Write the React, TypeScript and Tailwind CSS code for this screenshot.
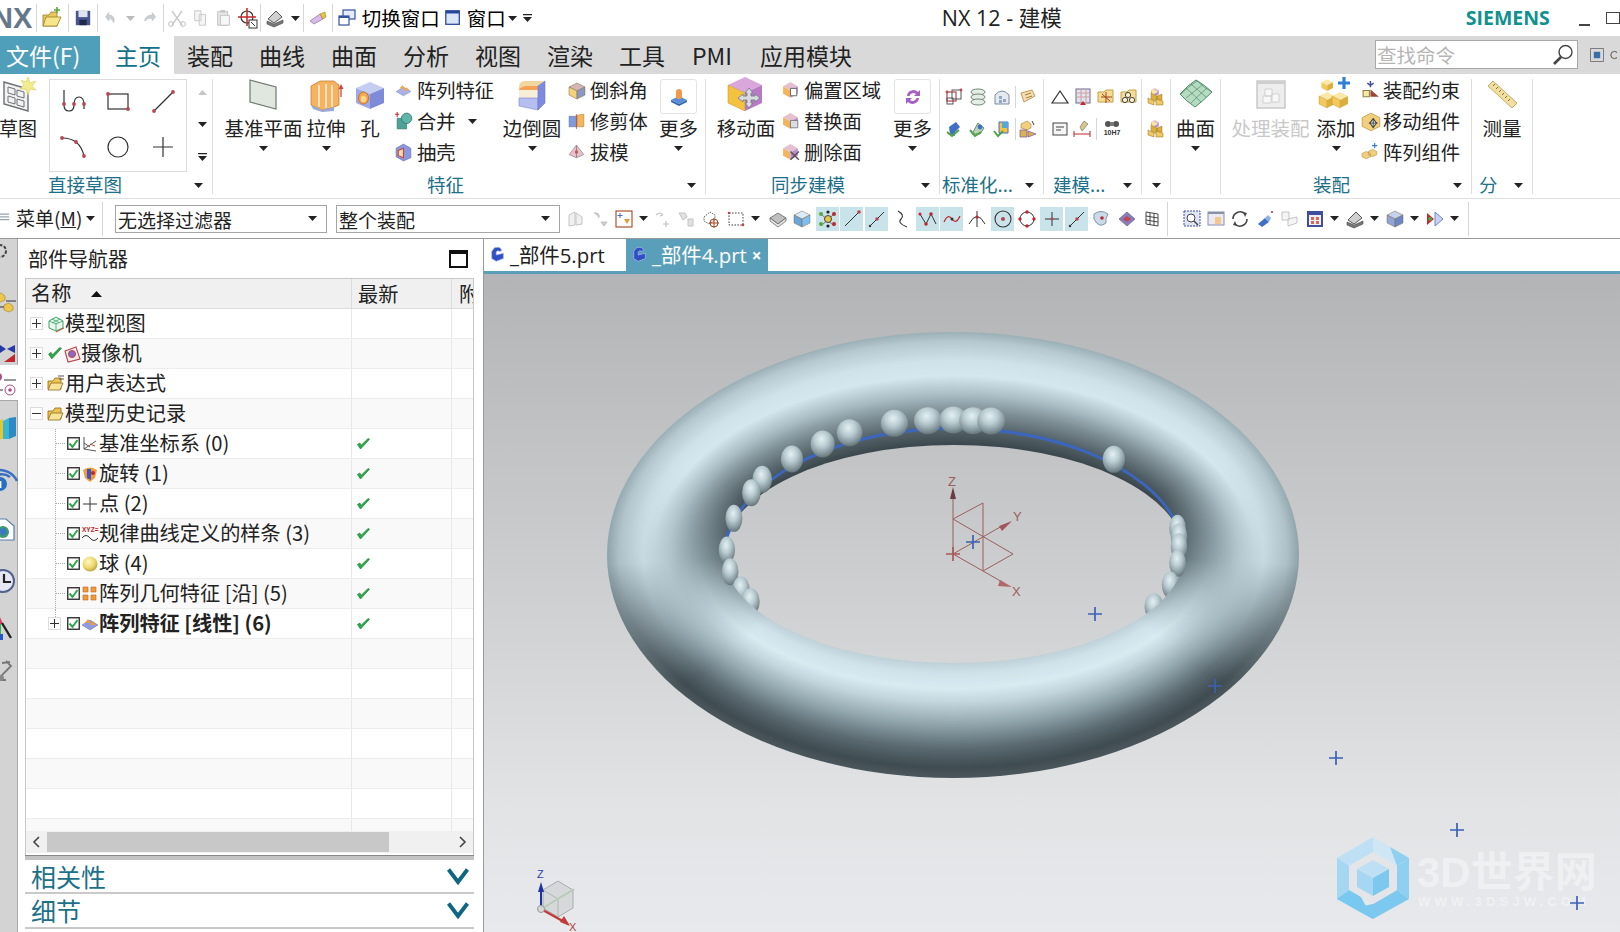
import React from "react";

type C = { children?: React.ReactNode };
const I = ({ s = 20, v = 20, children }: C & { s?: number; v?: number }) => (
  <svg width={s} height={s} viewBox={`0 0 ${v} ${v}`} className="block shrink-0">{children}</svg>
);
const Tri = () => (
  <svg width="9" height="5" viewBox="0 0 9 5" className="block shrink-0"><path d="M0 0H9L4.5 5Z" fill="#222" /></svg>
);
const TriBar = () => (
  <svg width="9" height="8" viewBox="0 0 9 8" className="block shrink-0"><path d="M0 0H9V1.2H0ZM0 3H9L4.5 8Z" fill="#222" /></svg>
);
const Cube = ({ t, l, r, s = 18 }: { t: string; l: string; r: string; s?: number }) => (
  <I s={s}>
    <path d="M10 2L18 6L10 10L2 6Z" fill={t} stroke="#7d6a4a" strokeWidth=".5" />
    <path d="M2 6L10 10V18L2 14Z" fill={l} stroke="#7d6a4a" strokeWidth=".5" />
    <path d="M10 10L18 6V14L10 18Z" fill={r} stroke="#7d6a4a" strokeWidth=".5" />
  </I>
);
const Dot = ({ x, y }: { x: number; y: number }) => <circle cx={x} cy={y} r="1.9" fill="#b5474f" />;

/* ---------- sketch gallery ---------- */
const SProfile = () => (
  <I s={30} v={30}><path d="M6 3V18Q6 24 11 24T16 18Q16 10 21 10T26 18V22M26 18" fill="none" stroke="#333" strokeWidth="1.2" /><Dot x={6} y={17} /><Dot x={16} y={17} /><Dot x={26} y={17} /></I>
);
const SRect = () => (
  <I s={30} v={30}><rect x="5" y="7" width="20" height="15" fill="none" stroke="#333" strokeWidth="1.2" /><Dot x={5} y={7} /><Dot x={25} y={22} /></I>
);
const SLine = () => (
  <I s={30} v={30}><path d="M6 24L25 5" stroke="#333" strokeWidth="1.2" /><Dot x={6} y={24} /><Dot x={25} y={5} /></I>
);
const SArc = () => (
  <I s={30} v={30}><path d="M4 6Q22 6 26 24" fill="none" stroke="#333" strokeWidth="1.2" /><Dot x={4} y={6} /><Dot x={18} y={10} /><Dot x={26} y={24} /></I>
);
const SCircle = () => <I s={30} v={30}><circle cx="15" cy="15" r="10" fill="none" stroke="#333" strokeWidth="1.2" /></I>;
const SPlus = () => <I s={30} v={30}><path d="M15 5V25M5 15H25" stroke="#333" strokeWidth="1.2" /></I>;

/* ---------- big icons ---------- */
const SketchBig = () => (
  <I s={38} v={38}>
    <path d="M5 6L29 13V35L5 28Z" fill="#f2f2f2" stroke="#6d7275" strokeWidth="1.4" />
    <path d="M9 11L16 13V19L9 17ZM18 14L25 16V22L18 20ZM9 20L16 22V28L9 26ZM18 23L25 25V31L18 29Z" fill="none" stroke="#6d7275" />
    <path d="M29 1L31 7L37 5L33 10L37 14L31 13L29 19L27 13L21 13L25 9L22 4L27 6Z" fill="#f3ec8f" stroke="#d9c957" strokeWidth=".6" />
  </I>
);
const Plane = () => (
  <I s={34} v={34}><path d="M3 2L29 9V31L3 24Z" fill="#dfe7df" stroke="#6f7a72" strokeWidth="1.2" /></I>
);
const Extrude = () => (
  <I s={36} v={36}>
    <path d="M3 9L12 4H26L31 8V28L24 31L14 33L3 28Z" fill="#f6b25f" stroke="#b9752a" strokeWidth=".7" />
    <path d="M11 8V30M18 7V31M24 8V30" stroke="#fff1d8" strokeWidth="1.6" />
    <path d="M3 28L14 33L26 30V34L14 35L5 32Z" fill="#9aa7d9" />
    <path d="M33 20V10" stroke="#c84a3c" strokeWidth="1.3" /><path d="M30.5 12L33 7L35.5 12Z" fill="#c84a3c" />
  </I>
);
const Hole = () => (
  <I s={32} v={32}>
    <path d="M16 3L30 9L16 15L2 9Z" fill="#c5cdf0" /><path d="M2 9L16 15V30L2 24Z" fill="#9fa9e6" /><path d="M16 15L30 9V24L16 30Z" fill="#7e8bd8" />
    <ellipse cx="9.5" cy="19" rx="5" ry="6" fill="#f5a94e" stroke="#c9742a" />
    <ellipse cx="9.5" cy="20" rx="2.7" ry="3.2" fill="#ffd58c" />
  </I>
);
const Blend = () => (
  <I s={36} v={36}>
    <path d="M5 10Q5 4 11 4H30L24 9H11Q8 9 5 12Z" fill="#f2d6a0" />
    <path d="M5 12Q8 9 11 9H24V13H5Z" fill="#f5a258" /><path d="M5 13H24V21H5Z" fill="#f7eed8" />
    <path d="M5 21H24V33L5 29Z" fill="#b6bdf0" stroke="#7e87c9" strokeWidth=".6" /><path d="M24 9L31 4V26L24 33Z" fill="#7d8ae0" stroke="#6a76c4" strokeWidth=".6" />
  </I>
);
const MoveFace = () => (
  <I s={40} v={40}>
    <path d="M19 2L36 10L19 18L2 10Z" fill="#d9a7dc" /><path d="M2 10L19 18V36L2 28Z" fill="#f3c23f" stroke="#c28f20" strokeWidth=".5" /><path d="M19 18L36 10V28L19 36Z" fill="#b879c5" />
    <path d="M23 13L27 18H25V21H29V19L34 23L29 27V25H25V28H27L23 33L19 28H21V25H17V27L12 23L17 19V21H21V18H19Z" fill="#d8dbe0" stroke="#79808a" strokeWidth=".9" />
  </I>
);
const More1 = () => (
  <I s={22} v={22}>
    <path d="M3 14L11 10L19 14L11 18Z" fill="#5a8fd8" /><path d="M3 14V16L11 20L19 16V14L11 18Z" fill="#3565b0" /><path d="M8 12V6Q8 3 11 3T14 6V12Q11 14 8 12Z" fill="#f29a4c" />
  </I>
);
const More2 = () => (
  <I s={20}><path d="M4 9A6.5 6.5 0 0 1 15 5L17 3V9H11L13 7A4 4 0 0 0 6.5 9ZM16 11A6.5 6.5 0 0 1 5 15L3 17V11H9L7 13A4 4 0 0 0 13.5 11Z" fill="#a75fc4" /></I>
);
const Surface = () => (
  <I s={36} v={36}>
    <path d="M2 17Q10 8 18 3Q27 8 34 15Q25 24 17 30Q8 24 2 17Z" fill="#b5dcc0" stroke="#4f8a6a" strokeWidth="1" />
    <path d="M8 11Q16 18 23 25M13 7Q21 14 28 20M18 3Q26 11 34 15M3 17Q11 9 19 4M8 21Q17 14 24 8M13 26Q21 18 29 11" fill="none" stroke="#4f8a6a" strokeWidth=".7" />
  </I>
);
const ProcessAsm = () => (
  <I s={34} v={34}>
    <rect x="3" y="3" width="28" height="27" fill="#ededed" stroke="#c5c5c5" strokeWidth="1.4" /><rect x="3" y="3" width="28" height="3" fill="#cfcfcf" />
    <path d="M11 11H18V18H11ZM18 16H25V24H18ZM9 18H17V25H9Z" fill="#f8f8f8" stroke="#d0d0d0" />
  </I>
);
const AddComp = () => (
  <I s={38} v={38}>
    <g transform="translate(3 2) scale(.72)"><path d="M10 2L18 6L10 10L2 6Z" fill="#fbe8a6" /><path d="M2 6L10 10V18L2 14Z" fill="#f2c95c" /><path d="M10 10L18 6V14L10 18Z" fill="#dcae3e" /></g>
    <g transform="translate(0 14)"><path d="M10 2L18 6L10 10L2 6Z" fill="#fbe8a6" /><path d="M2 6L10 10V18L2 14Z" fill="#f2c95c" stroke="#b78c2a" strokeWidth=".4" /><path d="M10 10L18 6V14L10 18Z" fill="#dcae3e" /></g>
    <g transform="translate(13 14)"><path d="M10 2L18 6L10 10L2 6Z" fill="#fbe8a6" /><path d="M2 6L10 10V18L2 14Z" fill="#f2c95c" stroke="#b78c2a" strokeWidth=".4" /><path d="M10 10L18 6V14L10 18Z" fill="#dcae3e" /></g>
    <path d="M27 1V13M21 7H33" stroke="#2f7fd6" strokeWidth="3.2" />
  </I>
);
const Ruler = () => (
  <I s={34} v={34}>
    <path d="M3 8L8 3L32 25L27 30Z" fill="#f2dfa0" stroke="#b59b55" strokeWidth=".8" />
    <path d="M8 8L10 6M11 11L13 9M14 14L16 12M17 17L19 15M20 20L22 18M23 23L25 21" stroke="#8a6d2c" strokeWidth="1" />
  </I>
);

/* ---------- small icons ---------- */
const Ps = { o: "#f2b04c", b: "#8b97e0", p: "#c69ad0" };
const IOpen = () => (
  <I s={22} v={22}><path d="M2 8H8L10 5H16V19H2Z" fill="#e8c95b" stroke="#9b7f22" strokeWidth=".8" /><path d="M2 19L5 10H20L16 19Z" fill="#f6e58a" stroke="#9b7f22" strokeWidth=".8" /><path d="M13 3H19M16 0V6" stroke="#58a83a" strokeWidth="1.6" /></I>
);
const ISave = () => (
  <I s={18}><rect x="2" y="2" width="16" height="16" fill="#47568c" /><rect x="5" y="2" width="10" height="7" fill="#dfe3ee" /><rect x="6" y="12" width="8" height="6" fill="#20284b" /></I>
);
const IUndo = ({ f = false }: { f?: boolean }) => (
  <I s={17}><path d={f ? "M16 8L12 3V6Q4 6 3 13Q7 9 12 10V13Z" : "M4 8L8 3V6Q16 6 14 15Q12 10 8 10V13Z"} fill="#c9ced2" stroke="#b5bbc0" strokeWidth=".6" /></I>
);
const ICut = () => <I s={20}><path d="M5 17L15 3M15 17L5 3" stroke="#c8c8c8" strokeWidth="1.3" /><circle cx="4" cy="16" r="2.4" fill="none" stroke="#c0c0c0" /><circle cx="16" cy="16" r="2.4" fill="none" stroke="#c0c0c0" /></I>;
const ICopy = () => <I s={18}><path d="M3 2H10V13H3ZM8 6H15V18H8Z" fill="#f5f5f5" stroke="#c6c6c6" /></I>;
const IPaste = () => <I s={18}><path d="M3 3H14V18H3Z" fill="#e8e8e8" stroke="#bdbdbd" /><path d="M6 7H16V18H6Z" fill="#f7f7f7" stroke="#bdbdbd" /><rect x="6" y="1" width="5" height="3" fill="#c8c8c8" /></I>;
const ITarget = () => (
  <I s={22} v={22}><circle cx="10" cy="10" r="6" fill="none" stroke="#333" strokeWidth="1.2" /><path d="M10 1V19M1 10H19" stroke="#c1272d" strokeWidth="1.5" /><rect x="12" y="13" width="8" height="8" fill="#fff" stroke="#333" /><path d="M14 15L18 19" stroke="#333" /></I>
);
const ILayer = () => (
  <I s={20}><path d="M3 11L11 3L17 9L9 15Z" fill="#d0d0d0" stroke="#555" /><path d="M2 13L9 16L18 12V15L9 19L2 16Z" fill="#777" stroke="#444" strokeWidth=".6" /></I>
);
const IBrush = () => <I s={20}><path d="M2 13L12 6L15 11L6 16Z" fill="#d9b8ea" stroke="#7a5f8c" strokeWidth=".6" /><path d="M12 6L17 4L18 9L15 11Z" fill="#e8c24a" stroke="#9b7f22" strokeWidth=".6" /></I>;
const ISwitch = () => <I s={20}><rect x="6" y="2" width="12" height="9" fill="#e6ecfa" stroke="#36539e" strokeWidth="1.2" /><rect x="2" y="8" width="10" height="9" fill="#fff" stroke="#36539e" strokeWidth="1.2" /><rect x="2" y="8" width="10" height="2" fill="#36539e" /></I>;
const IWin = () => <I s={18}><rect x="2" y="2" width="15" height="15" fill="#dbe5fa" stroke="#27469b" strokeWidth="1.4" /><rect x="2" y="2" width="15" height="3" fill="#27469b" /></I>;

const IPattern = () => <I s={21}><path d="M2 11L9 7L16 11L9 15Z" fill="#a9b1e8" stroke="#8087bf" strokeWidth=".5" /><path d="M5 8L8 5L11 8ZM9 10L12 7L15 10Z" fill="#f0a650" /></I>;
const IUnite = () => <I s={21}><path d="M3 7H12V17H3Z" fill="#4fa296" stroke="#2a6f66" strokeWidth=".6" /><circle cx="12" cy="7" r="5" fill="#5fb5a8" stroke="#2a6f66" strokeWidth=".7" /><path d="M3 1V6M1 3H5" stroke="#c1272d" /></I>;
const IShell = () => <I s={21}><path d="M9 2L16 6V15L9 18L2 14V6Z" fill={Ps.b} stroke="#6a6f9c" strokeWidth=".6" /><path d="M4 8L9 6V15L4 13Z" fill="#f4d9b0" stroke="#c1472d" /></I>;
const IChamfer = () => <Cube t="#d4b6b6" l="#f3d27a" r="#8b97c9" s={20} />;
const ITrim = () => <I s={21}><path d="M2 5H9V15H2Z" fill="#7f9be0" stroke="#456" strokeWidth=".4" /><path d="M10 4L16 3V15L10 15Z" fill="#f3b85d" stroke="#a5731f" strokeWidth=".5" /><path d="M9 3V17" stroke="#c1472d" strokeWidth=".8" /></I>;
const IDraft = () => <I s={21}><path d="M9 3L16 12L9 15L2 12Z" fill="#e2c4cd" stroke="#a27c88" strokeWidth=".7" /><path d="M9 3V15" stroke="#a27c88" /><circle cx="9" cy="9.5" r="1.6" fill="#c5555e" /></I>;
const Cube0 = () => (<><path d="M9 2L16 6L9 10L2 6Z" fill="#e5c0cf" /><path d="M2 6L9 10V17L2 13Z" fill="#f2b45c" /><path d="M9 10L16 6V13L9 17Z" fill="#b98fcf" /></>);
const IOffset = () => <I s={21}><Cube0 /><path d="M9 8H15V15H9Z" fill="#fff" stroke="#555" strokeWidth=".8" /></I>;
const IReplace = () => <I s={21}><Cube0 /><path d="M9 9H16V16H9Z" fill="#d9dde2" stroke="#666" strokeWidth=".7" /></I>;
const IDelete = () => <I s={21}><Cube0 /><path d="M9 9L17 17M17 9L9 17" stroke="#555" strokeWidth="1.4" /></I>;
const IConstr = () => <I s={21}><path d="M2 10H8V16H2Z" fill="#f5e9a8" stroke="#8a8040" /><path d="M9 9L17 16H9Z" fill="#9b4438" /><path d="M9 1V7M6 3L9 5L12 3" stroke="#3b4f9e" strokeWidth="1.4" fill="none" /></I>;
const IMoveComp = () => <I s={22}><path d="M10 2L18 6V14L10 18L2 14V6Z" fill="#f2cf7d" stroke="#b78c2a" strokeWidth=".6" /><path d="M12 7L15 11L12 15L9 11Z" fill="#fff" stroke="#444" /><path d="M8 11H16M12 7V15" stroke="#444" strokeWidth=".9" /></I>;
const IPatComp = () => <I s={21}><path d="M1 11L5 9L9 11V14L5 16L1 14ZM7 9L11 7L15 9V12L11 14L7 12Z" fill="#f2cf7d" stroke="#a5823a" strokeWidth=".5" /><path d="M13 1V6M10.5 3.5H15.5" stroke="#2f7fd6" strokeWidth="1.1" /></I>;

const G = { r: "#b5474f", g: "#6f8a72" };
const Std1 = () => <I s={20}><rect x="3" y="5" width="9" height="9" fill="none" stroke="#b5474f" strokeWidth="1.2" /><rect x="8" y="3" width="9" height="9" fill="none" stroke="#555" /><rect x="3" y="11" width="6" height="6" fill="none" stroke="#555" /><circle cx="3" cy="5" r="1.4" fill={G.r} /><circle cx="17" cy="3" r="1.4" fill={G.r} /></I>;
const Std2 = () => <I s={20}><ellipse cx="10" cy="5" rx="7" ry="3" fill="#e7ece7" stroke={G.g} /><ellipse cx="10" cy="10" rx="7" ry="3" fill="#e7ece7" stroke={G.g} /><ellipse cx="10" cy="15" rx="7" ry="3" fill="#e7ece7" stroke={G.g} /></I>;
const Std3 = () => <I s={20}><path d="M3 8Q10 0 17 8V17H3Z" fill="#e4eaf0" stroke="#7a8da0" /><path d="M7 9H10V12H7ZM11 12H14V15H11ZM7 13H10V16H7Z" fill="#93a8c0" /></I>;
const Std4 = () => <I s={20}><path d="M3 6L14 3L17 9L6 15Z" fill="#f4deb0" stroke="#c29a55" /><path d="M7 8L13 6M8 11L14 9" stroke="#a87f3c" /></I>;
const Std5 = () => <I s={20}><path d="M5 8L12 3L16 8L11 13V17L6 15Z" fill="#3f6fc6" /><path d="M3 13L8 17L15 11" fill="none" stroke="#4fa24a" strokeWidth="2" /></I>;
const Std6 = () => <I s={20}><path d="M4 15L10 4L16 9L12 15Z" fill="#b9d2b8" stroke="#6f8a72" /><path d="M2 11L7 17L13 13" fill="none" stroke="#4fa24a" strokeWidth="2" /><circle cx="12" cy="8" r="2.4" fill="#3f6fc6" /></I>;
const Std7 = () => <I s={20}><path d="M7 3L16 3V14H7Z" fill="#f4c244" stroke="#3f6fc6" /><path d="M10 3H16V9H10Z" fill="#5aa6d6" /><path d="M2 12L6 17L11 12" fill="none" stroke="#4fa24a" strokeWidth="2" /></I>;
const Std8 = () => <I s={20}><path d="M3 5L9 2L13 5V9L9 11L3 9Z" fill="#f2cf7d" stroke="#a5823a" strokeWidth=".6" /><path d="M2 11H9V18H2ZM10 12L18 15L10 18Z" fill="#d8b350" stroke="#7d4fa0" strokeWidth=".7" /><path d="M14 2L16 6" stroke="#3c3c3c" /></I>;
const M1 = () => <I s={20}><path d="M10 4L18 16H2Z" fill="none" stroke="#333" strokeWidth="1.2" /></I>;
const M2 = () => <I s={20}><rect x="3" y="2" width="14" height="14" fill="#e5e2f0" stroke="#6f6a8a" /><path d="M3 6H17M3 10H17M8 2V16M13 2V16" stroke="#c9a1a1" /><path d="M7 18L10 14L13 18Z" fill="#c1272d" /></I>;
const M3 = () => <I s={20}><path d="M2 5H8L10 3H17V15H2Z" fill="#f4dc94" stroke="#c2a04a" /><path d="M10 5V16M5 10H16M6 7L14 14" stroke="#a5421f" strokeWidth="1" /></I>;
const M4 = () => <I s={20}><path d="M2 5H8L10 3H17V15H2Z" fill="#f4dc94" stroke="#c2a04a" /><circle cx="9" cy="8" r="2.6" fill="#f8f0d8" stroke="#444" /><circle cx="6" cy="13" r="2.6" fill="#f8f0d8" stroke="#444" /><circle cx="13" cy="13" r="2.6" fill="#f8f0d8" stroke="#444" /></I>;
const M5 = () => <I s={20}><rect x="3" y="4" width="14" height="12" fill="#f5f5f5" stroke="#444" /><path d="M6 8H14M6 11H11" stroke="#444" /></I>;
const M6 = () => <I s={20}><path d="M11 2L15 5L9 12L7 8Z" fill="#d9c48a" stroke="#666" strokeWidth=".6" /><path d="M1 15H17M1 12V18M17 12V18" stroke="#c1272d" /></I>;
const M7 = () => (
  <I s={20}><circle cx="6" cy="5" r="3" fill="#555" /><circle cx="14" cy="5" r="3" fill="#555" /><rect x="8" y="3" width="4" height="4" fill="#777" /><text x="10" y="16" fontSize="7" fontWeight="700" textAnchor="middle" fill="#333" fontFamily="Liberation Sans">10H7</text></I>
);
const Blocks = () => <I s={20}><g transform="translate(4 0) scale(.55)"><Cube0 /></g><path d="M6 2L12 5L6 8Z" fill="#fbe8a6" /><path d="M5 6L11 9V15L5 12ZM11 9L16 7V13L11 15Z" fill="#dcae3e" stroke="#8a6d2c" strokeWidth=".4" /><path d="M2 11L8 14V18L2 16ZM10 12L17 14V18L10 18Z" fill="#f2c95c" stroke="#8a6d2c" strokeWidth=".5" /></I>;

/* ---------- selection bar icons ---------- */
const Gray1 = () => <I s={20}><path d="M3 6L9 3V16L3 17ZM10 4L16 8V15L10 16Z" fill="#f0f0f0" stroke="#c4c4c4" /></I>;
const Gray2 = () => <I s={20}><path d="M4 4Q10 3 9 9M11 13H17L14 17Z" fill="#d0d0d0" stroke="#c0c0c0" /></I>;
const FilterB = () => <I s={20}><rect x="2" y="2" width="16" height="16" fill="#fff" stroke="#a5421f" strokeWidth="1.1" /><path d="M6 4V9M3.5 6.5H8.5" stroke="#3f6fc6" /><path d="M10 10H16L13 15Z" fill="#e39a35" /></I>;
const Gray3 = () => <I s={20}><path d="M4 6Q8 2 11 6M11 6L8 7M14 12V18M11 15H17" fill="none" stroke="#c2c2c2" strokeWidth="1.2" /></I>;
const Gray4 = () => <I s={20}><path d="M3 4H9L11 8L7 11ZM12 10H17V17H12Z" fill="#e1e1e1" stroke="#c4c4c4" /></I>;
const Sel1 = () => <I s={20}><path d="M3 8L9 3L14 6V11L8 15L3 12Z" fill="#fff" stroke="#666" strokeDasharray="1.5 1" /><circle cx="13" cy="14" r="4" fill="none" stroke="#a5421f" /><path d="M13 9V19M8 14H18" stroke="#a5421f" /></I>;
const Sel2 = () => <I s={20}><rect x="3" y="4" width="14" height="12" fill="none" stroke="#444" strokeDasharray="1.6 1.4" /><circle cx="17" cy="16" r="1.3" fill="#b5474f" /><circle cx="3" cy="4" r="1.3" fill="#b5474f" /></I>;
const Sel3 = () => <I s={20}><path d="M2 9L10 4L18 9L10 15Z" fill="#bfbfbf" stroke="#555" strokeWidth=".7" /><path d="M2 9V12L10 18L18 12V9L10 15Z" fill="#e8e8e8" stroke="#555" strokeWidth=".7" /></I>;
const Sel4 = () => <Cube t="#d9ecf7" l="#6ba5dc" r="#7dbdf0" s={20} />;
const HL = (p: C) => <div className="w-[23px] h-[24px] bg-[#c9e3ea] flex items-center justify-center shrink-0">{p.children}</div>;
const S5 = () => <I s={20}><path d="M3 5L16 17M3 17L16 5" stroke="#444" strokeWidth=".7" /><circle cx="3" cy="5" r="2" fill="#58a83a" /><circle cx="3" cy="15" r="2" fill="#58a83a" /><circle cx="10" cy="10" r="3.5" fill="#e9c544" stroke="#444" /><circle cx="16" cy="5" r="2" fill="#c1272d" /><circle cx="16" cy="15" r="2" fill="#c1272d" /><circle cx="10" cy="3" r="1.6" fill="#222" /><circle cx="10" cy="17" r="1.6" fill="#222" /></I>;
const SelLine = ({ m = false }: { m?: boolean }) => <I s={20}><path d="M3 17L17 3" stroke="#333" strokeWidth="1" /><circle cx={m ? 10 : 17} cy={m ? 10 : 3} r="1.8" fill="#b5474f" />{m && <circle cx="3" cy="17" r="1.2" fill="#333" />}</I>;
const Curve = () => <I s={20}><path d="M6 2Q13 6 9 10T15 18" fill="none" stroke="#333" strokeWidth="1.1" /></I>;
const Zig = () => <I s={20}><path d="M2 5L8 15L13 5L18 15" fill="none" stroke="#333" strokeWidth="1" /><circle cx="8" cy="15" r="1.8" fill="#c1272d" /><circle cx="13" cy="5" r="1.8" fill="#c1272d" /><circle cx="2" cy="5" r="1.5" fill="#c1272d" /></I>;
const Wave = () => <I s={20}><path d="M2 13Q6 4 10 10T18 7" fill="none" stroke="#c1272d" strokeWidth="1.2" /><circle cx="10" cy="10" r="1.5" fill="#333" /></I>;
const Tang = () => <I s={20}><path d="M2 15Q10 0 18 15" fill="none" stroke="#333" /><path d="M10 2V18" stroke="#333" /><circle cx="10" cy="8" r="1.6" fill="#c1272d" /></I>;
const Cen = () => <I s={20}><circle cx="10" cy="10" r="8" fill="none" stroke="#333" strokeWidth="1.1" /><circle cx="10" cy="10" r="2" fill="#b5474f" /></I>;
const Quad = () => <I s={20}><circle cx="10" cy="10" r="7" fill="none" stroke="#333" /><circle cx="10" cy="3" r="1.7" fill="#c1272d" /><circle cx="10" cy="17" r="1.7" fill="#c1272d" /><circle cx="3" cy="10" r="1.7" fill="#c1272d" /><circle cx="17" cy="10" r="1.7" fill="#c1272d" /></I>;
const Pt = () => <I s={20}><path d="M10 3V17M3 10H17" stroke="#333" /><circle cx="10" cy="10" r="1.4" fill="#b5474f" /></I>;
const Disc = () => <I s={20}><path d="M3 5Q10 0 17 5Q14 10 15 14Q8 20 3 10Z" fill="#c9dbe8" stroke="#7f94a8" /><circle cx="11" cy="9" r="1.8" fill="#c1272d" /></I>;
const Dia = () => <I s={20}><path d="M2 10L10 3L18 10L10 17Z" fill="#8c7ac0" stroke="#555" strokeWidth=".6" /><path d="M6 10L10 7L14 10L10 13Z" fill="#c2484c" /></I>;
const Grid = () => <I s={20}><path d="M4 3L16 5V17L4 15ZM8 4V16M12 4.5V16.5M4 7L16 9M4 11L16 13" fill="#fff" stroke="#333" strokeWidth=".9" /></I>;
const V1 = () => <I s={20}><rect x="2" y="2" width="16" height="15" fill="#dfe5f5" stroke="#3b4f9e" strokeDasharray="2 1" /><circle cx="9" cy="9" r="4" fill="#fff" stroke="#444" /><path d="M12 12L16 16" stroke="#444" strokeWidth="1.4" /></I>;
const V2 = () => <I s={20}><rect x="2" y="3" width="16" height="13" fill="#e9eaf2" stroke="#8a90a8" /><rect x="2" y="3" width="16" height="2" fill="#8a90a8" /><path d="M9 8H15V15H9Z" fill="#f2c98a" /></I>;
const V3 = () => <I s={20}><path d="M3 10A7 7 0 0 1 15 5M17 10A7 7 0 0 1 5 15" fill="none" stroke="#444" strokeWidth="1.6" /><path d="M13 3L17 4L15 8ZM7 17L3 16L5 12Z" fill="#444" /></I>;
const V4 = () => <I s={20}><path d="M3 15L10 9L14 13L7 18Z" fill="#3f6fc6" /><path d="M10 9L13 6L16 9L14 13Z" fill="#8bb0e6" /><circle cx="17" cy="3" r="1" fill="#c1272d" /></I>;
const V5 = () => <I s={20}><path d="M2 3H9V11H2ZM8 10L17 8V14L8 17Z" fill="#f5f5f5" stroke="#c4c4c4" /></I>;
const V6 = () => <I s={20}><rect x="2" y="2" width="16" height="16" fill="#3f4fa0" /><rect x="4" y="6" width="12" height="10" fill="#f0f0f4" /><path d="M6 8H9V11H6ZM11 8H14V11H11ZM6 12H9V15H6ZM11 12H14V15H11Z" fill="#d86a52" /></I>;
const V7 = () => <Cube t="#c3d2ee" l="#8fa5d8" r="#6d86c6" s={20} />;
const V8 = () => <I s={20}><path d="M2 4L9 10L2 16Z" fill="#c1272d" /><path d="M10 3L18 10L10 17Z" fill="#c9d2ee" stroke="#6d86c6" /><circle cx="5" cy="10" r="2" fill="#52a24a" /></I>;

/* ---------- tree icons ---------- */
const Check = ({ s = 15 }: { s?: number }) => <I s={s}><path d="M2 10L6 16L18 3L16 2L7 11L5 8Z" fill="#2ea84c" stroke="#1f8a3a" strokeWidth="1" /></I>;
const Box = () => (
  <svg width="13" height="13" viewBox="0 0 13 13" className="block shrink-0"><rect x=".75" y=".75" width="11.5" height="11.5" fill="#fff" stroke="#333" strokeWidth="1.4" /><path d="M2.5 6.5L5.5 10L10.5 3" fill="none" stroke="#2ea84c" strokeWidth="2" /></svg>
);
const Exp = ({ open = false }: { open?: boolean }) => (
  <svg width="13" height="13" viewBox="0 0 13 13" className="block shrink-0"><rect x=".5" y=".5" width="12" height="12" fill="#fff" stroke="#dcdcdc" /><path d={open ? "M2 6.5H11" : "M2 6.5H11M6.5 2V11"} stroke="#333" /></svg>
);
const TView = () => <I s={18} v={18}><path d="M9 2L16 6V13L9 16L2 13V6Z" fill="#e9f6ee" stroke="#3aa563" /><path d="M9 8V16M2 6L9 9L16 6M5 4L12 7.5M13 4L5 8" stroke="#3aa563" strokeWidth=".8" fill="none" /><path d="M9 17L17 13" stroke="#c1472d" /></I>;
const TCam = () => <I s={18} v={18}><path d="M2 6L13 2L17 14L5 17Z" fill="#f7e9e9" stroke="#b5474f" strokeWidth="1.1" /><circle cx="9" cy="9" r="3.5" fill="#8d6ac0" stroke="#b5474f" /></I>;
const Folder = ({ lines = false }: { lines?: boolean }) => <I s={18} v={18}><path d="M1 6H6L8 3H14V14H1Z" fill="#f0c44e" stroke="#8a6a14" strokeWidth=".8" /><path d="M1 15L4 8H16L13 15Z" fill="#f9e39a" stroke="#8a6a14" strokeWidth=".8" />{lines && <path d="M11 1H17M12 4H17" stroke="#555" />}</I>;
const TCsys = () => <I s={18} v={18}><path d="M3 2V14L15 6M3 14L15 16M3 8L9 12" fill="none" stroke="#444" strokeWidth=".9" /><path d="M9 9L14 11" stroke="#c1472d" /></I>;
const TRev = () => <I s={18} v={18}><path d="M2 5Q9 0 16 5L14 13L9 17L4 13Z" fill="#f29c38" /><path d="M6 4H10V15L6 13Z" fill="#3d55c4" /><circle cx="12" cy="8" r="2" fill="#c1272d" /></I>;
const TPoint = () => <I s={18} v={18}><path d="M9 2V16M2 9H16" stroke="#333" /></I>;
const TLaw = () => <I s={18} v={18}><text x="1" y="7" fontSize="6.5" fontWeight="700" fill="#c1272d" fontFamily="Liberation Sans">XYZ=</text><path d="M1 13Q5 8 9 13T17 13" fill="none" stroke="#333" /></I>;
const TSphere = () => <I s={18} v={18}><defs><radialGradient id="tsp" cx=".4" cy=".35" r=".7"><stop offset="0" stopColor="#fff8c4" /><stop offset=".6" stopColor="#ecd76a" /><stop offset="1" stopColor="#b89d3a" /></radialGradient></defs><circle cx="9" cy="9" r="7.5" fill="url(#tsp)" /></I>;
const TPat = () => <I s={18} v={18}><path d="M2 2H7V7H2ZM10 2H15V7H10ZM2 10H7V15H2ZM10 10H15V15H10Z" fill="#f29c38" stroke="#b5632a" strokeWidth=".6" /></I>;
const TLin = () => <I s={18} v={18}><path d="M1 10L9 5L17 10L9 15Z" fill="#8f9ae0" stroke="#6a6f9c" strokeWidth=".5" /><path d="M4 8L7 4L10 8ZM9 10L12 6L15 10Z" fill="#f09a40" /></I>;

/* ---------- helpers ---------- */
const Sep = ({ c = "h-[28px]" }: { c?: string }) => <div className={`w-px bg-[#d6d6d6] shrink-0 ${c}`} />;
const Cell = ({ c, children }: C & { c: string }) => <div className={`flex items-center justify-center shrink-0 ${c}`}>{children}</div>;

const Large = ({ c, icon, label, arrow = false, gray = false }: { c: string; icon: React.ReactNode; label: string; arrow?: boolean; gray?: boolean }) => (
  <div className={`flex flex-col items-center shrink-0 ${c}`}>
    <div className="h-[38px] flex items-center justify-center">{icon}</div>
    <div className={`h-[28px] leading-[28px] text-[19.5px] whitespace-nowrap ${gray ? "text-[#c8c8c8]" : ""}`}>{label}</div>
    {arrow && <div className="h-[12px] flex items-center"><Tri /></div>}
  </div>
);
const More = ({ c, icon }: { c: string; icon: React.ReactNode }) => (
  <div className={`flex flex-col items-center w-[37px] shrink-0 ${c}`}>
    <div className="h-[35px] w-[37px] mt-[3px] border border-[#e3e3e3] rounded-[3px] flex items-center justify-center">{icon}</div>
    <div className="h-[28px] leading-[28px] text-[19.5px] whitespace-nowrap">更多</div>
    <div className="h-[12px] flex items-center"><Tri /></div>
  </div>
);
const Rows = ({ c, w, rows, gap = "gap-[4px]" }: { c: string; w: string; gap?: string; rows: [React.ReactNode, string, boolean?][] }) => (
  <div className={`flex flex-col shrink-0 -mt-[1px] ${c} ${w}`}>
    {rows.map(([ic, t, a], i) => (
      <div key={i} className={`h-[31px] flex items-center ${gap}`}>
        <div className="w-[18px] flex justify-center shrink-0">{ic}</div>
        <span className="text-[19.3px] whitespace-nowrap">{t}</span>
        {a && <span className="ml-[8px]"><Tri /></span>}
      </div>
    ))}
  </div>
);
const Group = ({ w, label, lc, children, arrow = true }: C & { w: string; label?: string; lc?: string; arrow?: boolean }) => (
  <div className={`flex flex-col shrink-0 ${w}`}>
    <div className="h-[98px] pt-[2px] flex">{children}</div>
    <div className="h-[26px] flex items-center justify-between">
      <span className={`text-[18.5px] text-[#1c7089] whitespace-nowrap ${lc ?? ""}`}>{label ?? ""}</span>
      {arrow && <span className="mr-[9px]"><Tri /></span>}
    </div>
  </div>
);
const GSep = () => <div className="w-px bg-[#dddddd] mt-[5px] mb-[4px] shrink-0" />;

const Tiny = ({ w, items }: { w: string; items: React.ReactNode[] }) => (
  <>{items.map((it, i) => <Cell key={i} c={`${w} h-[32px]`}>{it}</Cell>)}</>
);

/* ---------- toolbars ---------- */
const TitleBar = () => (
  <div className="h-[36px] flex items-center bg-white shrink-0">
    <div className="w-[37px] h-[36px] flex items-center overflow-hidden">
      <span className="ml-[-8px] text-[29px] leading-none font-bold text-[#64788a] font-['Liberation_Sans',sans-serif]">NX</span>
    </div>
    <Sep />
    <Cell c="w-[31px]"><IOpen /></Cell>
    <Sep />
    <Cell c="w-[28px]"><ISave /></Cell>
    <Sep />
    <Cell c="w-[26px]"><IUndo /></Cell>
    <Cell c="w-[14px]"><span className="opacity-30"><Tri /></span></Cell>
    <Cell c="w-[25px]"><IUndo f /></Cell>
    <Sep />
    <Cell c="w-[26px]"><ICut /></Cell>
    <Cell c="w-[23px]"><ICopy /></Cell>
    <Cell c="w-[23px]"><IPaste /></Cell>
    <Cell c="w-[24px]"><ITarget /></Cell>
    <Sep />
    <Cell c="w-[28px]"><ILayer /></Cell>
    <Cell c="w-[14px]"><Tri /></Cell>
    <Sep />
    <Cell c="w-[28px]"><IBrush /></Cell>
    <Sep />
    <Cell c="w-[29px]"><ISwitch /></Cell>
    <span className="w-[80px] text-[19.5px] whitespace-nowrap shrink-0">切换窗口</span>
    <Cell c="w-[22px]"><IWin /></Cell>
    <span className="w-[41px] pl-[3px] text-[19.5px] whitespace-nowrap shrink-0">窗口</span>
    <Cell c="w-[15px]"><Tri /></Cell>
    <Cell c="w-[15px]"><TriBar /></Cell>
    <span className="ml-[407px] w-[125px] text-[21.5px] whitespace-nowrap shrink-0 font-['Open_Sans','Noto_Sans_CJK_SC',sans-serif] text-[#222]">NX 12 - 建模</span>
    <span className="ml-[399px] w-[117px] text-[19.5px] font-bold text-[#0f9190] font-['Open_Sans',sans-serif]">SIEMENS</span>
    <div className="w-[11px] h-[2px] bg-[#444] mt-[14px] shrink-0" />
    <div className="ml-[16px] w-[14px] h-[12px] border border-[#444] shrink-0" />
  </div>
);

const Tabs = () => (
  <div className="h-[38px] flex bg-[#d9d9d9] shrink-0 text-[23px] text-[#222] leading-[38px]">
    <div className="w-[100px] bg-[#4f9eba] text-white pl-[6px] shrink-0">文件(F)</div>
    <div className="w-[2px] bg-white shrink-0" />
    <div className="w-[72px] bg-white text-center text-[#11718a] shrink-0">主页</div>
    {["装配", "曲线", "曲面", "分析", "视图", "渲染", "工具"].map((t) => (
      <div key={t} className="w-[72px] text-center shrink-0">{t}</div>
    ))}
    <div className="w-[68px] text-center shrink-0">PMI</div>
    <div className="w-[120px] text-center shrink-0">应用模块</div>
    <div className="ml-[509px] mt-[4px] w-[203px] h-[29px] bg-white border border-[#a8a8a8] flex items-center justify-between pr-[2px] shrink-0">
      <span className="text-[19.5px] text-[#b5b5b5] leading-none pl-[1px]">查找命令</span>
      <svg width="24" height="24" viewBox="0 0 24 24" className="block"><circle cx="14.5" cy="9" r="6.5" fill="#fff" stroke="#444" strokeWidth="1.4" /><path d="M10 14L3 21" stroke="#444" strokeWidth="2.6" /></svg>
    </div>
    <Cell c="ml-[10px] w-[18px] h-[38px]"><I s={16}><rect x="2" y="2" width="16" height="16" fill="none" stroke="#666" /><rect x="6" y="6" width="8" height="8" fill="#3b6dab" /></I></Cell>
    <Cell c="ml-[3px] w-[8px] h-[38px] overflow-hidden justify-start"><I s={12}><circle cx="9" cy="10" r="6" fill="none" stroke="#555" strokeWidth="1.6" /></I></Cell>
  </div>
);

const Ribbon = () => (
  <div className="h-[125px] flex bg-white border-b border-[#dedede] shrink-0 text-[#222]">
    <Group w="w-[212px]" label="直接草图" lc="ml-[48px]">
      <div className="w-[36px] flex flex-col items-center shrink-0">
        <div className="h-[38px] flex items-center justify-center"><SketchBig /></div>
        <div className="h-[28px] leading-[28px] text-[19px] whitespace-nowrap">草图</div>
      </div>
      <div className="ml-[13px] mt-[3px] w-[138px] h-[93px] pb-[2px] border border-[#dcdcdc] grid grid-cols-3 place-items-center shrink-0">
        <SProfile /><SRect /><SLine /><SArc /><SCircle /><SPlus />
      </div>
      <div className="ml-[6px] mt-[3px] w-[20px] h-[93px] flex flex-col items-center justify-between pt-[11px] pb-[11px]">
        <span className="opacity-25"><svg width="9" height="5" viewBox="0 0 9 5" className="block"><path d="M0 5H9L4.5 0Z" fill="#222" /></svg></span>
        <Tri />
        <TriBar />
      </div>
    </Group>
    <GSep />
    <Group w="w-[492px]" label="特征" lc="ml-[214px]">
      <Large c="ml-[12px] w-[77px]" icon={<Plane />} label="基准平面" arrow />
      <Large c="ml-[4px] w-[40px]" icon={<Extrude />} label="拉伸" arrow />
      <Large c="ml-[14px] w-[20px]" icon={<Hole />} label="孔" />
      <Rows c="ml-[15px]" w="w-[99px]" rows={[[<IPattern />, "阵列特征"], [<IUnite />, "合并", true], [<IShell />, "抽壳"]]} />
      <Large c="ml-[9px] w-[58px]" icon={<Blend />} label="边倒圆" arrow />
      <Rows c="ml-[7px]" w="w-[78px]" rows={[[<IChamfer />, "倒斜角"], [<ITrim />, "修剪体"], [<IDraft />, "拔模"]]} />
      <More c="ml-[14px]" icon={<More1 />} />
    </Group>
    <GSep />
    <Group w="w-[233px]" label="同步建模" lc="ml-[65px]">
      <Large c="ml-[11px] w-[58px]" icon={<MoveFace />} label="移动面" />
      <Rows c="ml-[7px]" w="w-[99px]" rows={[[<IOffset />, "偏置区域"], [<IReplace />, "替换面"], [<IDelete />, "删除面"]]} />
      <More c="ml-[13px]" icon={<More2 />} />
    </Group>
    <GSep />
    <Group w="w-[103px]" label="标准化..." lc="ml-[2px]">
      <div className="ml-[2px] pt-[5px] flex flex-col">
        <div className="flex items-center"><Tiny w="w-[24px]" items={[<Std1 />, <Std2 />, <Std3 />]} /><Sep c="h-[22px] ml-[1px]" /><Tiny w="w-[24px]" items={[<Std4 />]} /></div>
        <div className="flex items-center"><Tiny w="w-[24px]" items={[<Std5 />, <Std6 />, <Std7 />]} /><Sep c="h-[22px] ml-[1px]" /><Tiny w="w-[24px]" items={[<Std8 />]} /></div>
      </div>
    </Group>
    <GSep />
    <Group w="w-[97px]" label="建模..." lc="ml-[9px]">
      <div className="ml-[4px] pt-[5px] flex flex-col">
        <div className="flex items-center"><Tiny w="w-[23px]" items={[<M1 />, <M2 />, <M3 />, <M4 />]} /></div>
        <div className="flex items-center"><Tiny w="w-[23px]" items={[<M5 />, <M6 />]} /><Sep c="h-[22px] ml-[2px] mr-[3px]" /><Tiny w="w-[23px]" items={[<M7 />]} /></div>
      </div>
    </Group>
    <GSep />
    <Group w="w-[28px]" lc="">
      <div className="pt-[5px] flex flex-col w-[28px]">
        <Cell c="h-[32px]"><Blocks /></Cell>
        <Cell c="h-[32px]"><Blocks /></Cell>
      </div>
    </Group>
    <GSep />
    <Group w="w-[49px]" arrow={false}>
      <Large c="w-[49px]" icon={<Surface />} label="曲面" arrow />
    </Group>
    <GSep />
    <Group w="w-[250px]" label="装配" lc="ml-[92px]">
      <Large c="ml-[11px] w-[77px]" icon={<ProcessAsm />} label="处理装配" gray />
      <Large c="ml-[7px] w-[40px]" icon={<AddComp />} label="添加" arrow />
      <Rows c="ml-[6px]" w="w-[99px]" gap="gap-[3px]" rows={[[<IConstr />, "装配约束"], [<IMoveComp />, "移动组件"], [<IPatComp />, "阵列组件"]]} />
    </Group>
    <GSep />
    <Group w="w-[60px]" label="分" lc="ml-[7px]">
      <Large c="w-[60px]" icon={<Ruler />} label="测量" />
    </Group>
    <GSep />
  </div>
);

const Sel = ({ c, t }: { c: string; t: string }) => (
  <div className={`h-[28px] bg-white border border-[#a5a5a5] flex items-center justify-between pl-[2px] pr-[9px] shrink-0 ${c}`}>
    <span className="text-[19px] leading-none whitespace-nowrap pt-[1px]">{t}</span>
    <Tri />
  </div>
);
const B = ({ c = "w-[24px]", children }: C & { c?: string }) => <Cell c={`${c} h-[24px]`}>{children}</Cell>;
const SelBar = () => (
  <div className="h-[40px] flex items-center bg-white border-b border-[#9a9a9a] shrink-0 text-[#222]">
    <div className="w-[16px] overflow-hidden shrink-0"><I s={14}><path d="M-1 3H13M-1 7H13M-1 11H13" stroke="#7a8a9c" strokeWidth="1.4" /></I></div>
    <span className="text-[19px] w-[70px] whitespace-nowrap shrink-0">菜单(<span className="underline">M</span>)</span>
    <Tri />
    <Sep c="h-[34px] ml-[7px]" />
    <div className="w-[12px] shrink-0" />
    <Sel c="w-[212px]" t="无选择过滤器" />
    <div className="w-[9px] shrink-0" />
    <Sel c="w-[224px]" t="整个装配" />
    <div className="w-[4px] shrink-0" />
    <B><Gray1 /></B><B><Gray2 /></B><B><FilterB /></B><B c="w-[14px]"><Tri /></B>
    <B><Gray3 /></B><B><Gray4 /></B><B c="w-[25px]"><Sel1 /></B><B c="w-[25px]"><Sel2 /></B><B c="w-[14px]"><Tri /></B>
    <div className="w-[3px] shrink-0" />
    <B c="w-[26px]"><Sel3 /></B><B c="w-[22px]"><Sel4 /></B>
    <div className="w-[3px] shrink-0" />
    <HL><S5 /></HL><div className="w-px shrink-0" /><HL><SelLine /></HL><div className="w-[2px] shrink-0" /><HL><SelLine m /></HL>
    <B c="w-[28px]"><Curve /></B>
    <HL><Zig /></HL><div className="w-px shrink-0" /><HL><Wave /></HL>
    <B c="w-[28px]"><Tang /></B>
    <HL><Cen /></HL>
    <B c="w-[26px]"><Quad /></B>
    <HL><Pt /></HL><div className="w-[2px] shrink-0" /><HL><SelLine m /></HL>
    <B c="w-[25px]"><Disc /></B><B c="w-[27px]"><Dia /></B><B><Grid /></B>
    <div className="w-[3px] shrink-0" /><Sep c="h-[34px]" /><div className="w-[12px] shrink-0" />
    <B><V1 /></B><B c="w-[24px]"><V2 /></B><B c="w-[24px]"><V3 /></B><B c="w-[25px]"><V4 /></B><B c="w-[25px]"><V5 /></B>
    <B c="w-[25px]"><V6 /></B><B c="w-[15px]"><Tri /></B>
    <B c="w-[25px]"><ILayer /></B><B c="w-[15px]"><Tri /></B>
    <B c="w-[25px]"><V7 /></B><B c="w-[15px]"><Tri /></B>
    <B c="w-[25px]"><V8 /></B><B c="w-[15px]"><Tri /></B>
    <Sep c="h-[34px] ml-[6px]" />
  </div>
);

/* ---------- left side ---------- */
const RailIcons: React.ReactNode[] = [
  <I s={20}><circle cx="6" cy="10" r="6" fill="none" stroke="#444" strokeWidth="2" strokeDasharray="3 1.5" /></I>,
  <I s={26} v={26}><path d="M4 5L9 3L13 6V10L9 12L4 10ZM12 15L17 13L21 16V20L17 22L12 20Z" fill="#efc64d" stroke="#a58420" strokeWidth=".6" /><path d="M14 11H24M2 17H12" stroke="#333" /></I>,
  <I s={26} v={26}><path d="M14 3V7M8 8L14 12L8 16ZM23 8L15 12L23 16Z" fill="#2438a8" /><path d="M2 17H8V25H2Z" fill="#efc64d" /><path d="M12 25L23 17V25Z" fill="#c1272d" /></I>,
  <I s={26} v={26}><circle cx="6" cy="7" r="4" fill="#b04a8a" /><path d="M12 10H24M4 20H11" stroke="#333" /><circle cx="18" cy="20" r="5" fill="none" stroke="#b04a8a" /><circle cx="18" cy="20" r="1.8" fill="#b04a8a" /></I>,
  <I s={26} v={26}><path d="M2 9L6 6L6 24L2 24Z" fill="#2aa84a" /><path d="M6 6L10 4V24H6Z" fill="#e2c82e" /><path d="M10 6L16 3V24H10Z" fill="#39b5d0" /><path d="M16 3L23 2V21L16 24Z" fill="#2b8ac6" /></I>,
  <I s={26} v={26}><path d="M1 12A13 13 0 0 1 17 12M1 6A19 19 0 0 1 24 16" fill="none" stroke="#3970c4" strokeWidth="2.6" /><circle cx="7" cy="19" r="7" fill="#2a6ec4" /><rect x="6" y="16" width="2.4" height="7" fill="#fff" /></I>,
  <I s={26} v={26}><path d="M1 3H12L20 10V24H1Z" fill="#fff" stroke="#5b7ea8" strokeWidth="1.2" /><circle cx="9" cy="16" r="6" fill="#3d9b6d" /><path d="M5 13L11 12L13 17L8 20Z" fill="#3e76c8" /></I>,
  <I s={26} v={26}><circle cx="9" cy="13" r="11" fill="#e5e8f3" stroke="#53638f" strokeWidth="2" /><path d="M10 6V14H17" fill="none" stroke="#222" strokeWidth="2.2" /></I>,
  <I s={26} v={26}><path d="M1 10L6 4L6 24H1Z" fill="#35b04c" /><path d="M5 1L8 8H1Z" fill="#e23d5c" /><path d="M1 18H8V24H1Z" fill="#2458c8" /><path d="M7 7L16 22" stroke="#222" strokeWidth="2.4" /></I>,
  <I s={26} v={26}><path d="M5 5L13 4M9 3L14 8L5 17L2 22H9" fill="none" stroke="#777" strokeWidth="1.8" /><circle cx="4" cy="20" r="3" fill="#888" /></I>,
];
const Rail = () => (
  <div className="w-[18px] shrink-0 flex flex-col bg-[#d3d3d3] overflow-hidden">
    <div className="h-[126px] border-r border-[#a9a9a9] flex flex-col items-start">
      <div className="h-[24px] flex items-center ml-[-6px] shrink-0">{RailIcons[0]}</div>
      <div className="h-[24px] mt-[28px] flex items-center ml-[-8px] shrink-0">{RailIcons[1]}</div>
      <div className="h-[24px] mt-[23px] flex items-center ml-[-8px] shrink-0">{RailIcons[2]}</div>
    </div>
    <div className="h-[35px] bg-white flex items-center ml-[-8px] shrink-0">{RailIcons[3]}</div>
    <div className="flex-1 border-r border-[#a9a9a9] border-t flex flex-col items-start">
      <div className="h-[54px] flex items-center ml-[-7px] shrink-0">{RailIcons[4]}</div>
      <div className="h-[46px] flex items-center ml-[-7px] shrink-0">{RailIcons[5]}</div>
      <div className="h-[56px] flex items-center ml-[-6px] shrink-0">{RailIcons[6]}</div>
      <div className="h-[48px] flex items-center ml-[-6px] shrink-0">{RailIcons[7]}</div>
      <div className="h-[48px] flex items-center ml-[-5px] shrink-0">{RailIcons[8]}</div>
      <div className="h-[36px] flex items-center ml-[-3px] shrink-0">{RailIcons[9]}</div>
    </div>
  </div>
);

type RowT = { lead: React.ReactNode; text: string; bold?: boolean; done?: boolean; child?: boolean };
const treeRows: RowT[] = [
  { lead: <><div className="w-[21px] flex justify-center"><Exp /></div><TView /></>, text: "模型视图" },
  { lead: <><div className="w-[21px] flex justify-center"><Exp /></div><Check s={16} /><TCam /></>, text: "摄像机" },
  { lead: <><div className="w-[21px] flex justify-center"><Exp /></div><Folder lines /></>, text: "用户表达式" },
  { lead: <><div className="w-[21px] flex justify-center"><Exp open /></div><Folder /></>, text: "模型历史记录" },
  { lead: <TCsys />, text: "基准坐标系 (0)", done: true, child: true },
  { lead: <TRev />, text: "旋转 (1)", done: true, child: true },
  { lead: <TPoint />, text: "点 (2)", done: true, child: true },
  { lead: <TLaw />, text: "规律曲线定义的样条 (3)", done: true, child: true },
  { lead: <TSphere />, text: "球 (4)", done: true, child: true },
  { lead: <TPat />, text: "阵列几何特征 [沿] (5)", done: true, child: true },
  { lead: <TLin />, text: "阵列特征 [线性] (6)", done: true, child: true, bold: true },
];

const TreeRow = ({ r, i }: { r?: RowT; i: number }) => (
  <div className={`h-[30px] flex shrink-0 border-b border-[#ececec] text-[20.2px] text-[#222] ${i % 2 ? "bg-[#f9f9f9]" : "bg-white"}`}>
    <div className="w-[326px] border-r border-[#e8e8e8] flex items-center shrink-0 relative">
      {r && !r.child && (
        <>
          <div className="flex items-center shrink-0">{r.lead}</div>
          <span className="whitespace-nowrap">{r.text}</span>
        </>
      )}
      {r && r.child && (
        <>
          <div className={`absolute left-[29px] top-0 ${r.bold ? "h-[8px]" : "h-full"} border-l border-dotted border-[#aaa]`} />
          {r.bold ? (
            <div className="w-[41px] pl-[22px] shrink-0 flex justify-start"><Exp /></div>
          ) : (
            <div className="w-[41px] pl-[30px] shrink-0"><div className="border-t border-dotted border-[#aaa] w-[9px]" /></div>
          )}
          <Box />
          <div className="w-[18px] ml-[1px] flex justify-center shrink-0">{r.lead}</div>
          <span className={`whitespace-nowrap ${r.bold ? "font-bold" : ""}`}>{r.text}</span>
        </>
      )}
    </div>
    <div className="w-[100px] border-r border-[#e8e8e8] flex items-center pl-[4px] pt-[2px] shrink-0">{r?.done && <Check s={15} />}</div>
    <div className="w-[22px] shrink-0" />
  </div>
);

const Chevron = () => (
  <svg width="22" height="17" viewBox="0 0 22 17" className="block shrink-0"><path d="M1.5 1.5L11 14L20.5 1.5" fill="none" stroke="#0f6680" strokeWidth="4" /></svg>
);

const LeftPanel = () => (
  <div className="w-[466px] shrink-0 bg-white border-r border-[#9a9a9a] flex flex-col pl-[7px] pr-[9px] overflow-hidden">
    <div className="h-[39px] shrink-0 flex items-center justify-between pl-[3px] pr-[6px]">
      <span className="text-[20px] text-[#222] whitespace-nowrap">部件导航器</span>
      <div className="w-[19px] h-[18px] border-2 border-t-[4px] border-[#111]" />
    </div>
    <div className="h-[577px] shrink-0 w-[449px] border border-[#c8c8c8] border-b-0 flex flex-col overflow-hidden">
      <div className="h-[30px] shrink-0 flex bg-[#f0f0f0] border-b border-[#dcdcdc] text-[20.2px] text-[#222] overflow-hidden">
        <div className="w-[326px] border-r border-[#dcdcdc] flex items-center pl-[5px] shrink-0">
          <span>名称</span>
          <svg width="11" height="6" viewBox="0 0 11 6" className="block ml-[20px]"><path d="M0 6H11L5.5 0Z" fill="#111" /></svg>
        </div>
        <div className="w-[100px] border-r border-[#dcdcdc] pl-[6px] leading-[30px] shrink-0">最新</div>
        <div className="w-[22px] pl-[7px] leading-[30px] shrink-0 overflow-hidden whitespace-nowrap">附</div>
      </div>
      <div className="h-[522px] shrink-0 overflow-hidden flex flex-col">
        {Array.from({ length: 18 }).map((_, i) => <TreeRow key={i} i={i} r={treeRows[i]} />)}
      </div>
      <div className="h-[22px] shrink-0 flex items-center bg-[#f0f0f0]">
        <svg width="21" height="20" viewBox="0 0 21 20" className="block shrink-0"><path d="M13 5L8 10L13 15" fill="none" stroke="#444" strokeWidth="1.6" /></svg>
        <div className="w-[342px] h-[20px] bg-[#c8c8c8] shrink-0" />
        <div className="flex-1" />
        <svg width="21" height="20" viewBox="0 0 21 20" className="block shrink-0"><path d="M8 5L13 10L8 15" fill="none" stroke="#444" strokeWidth="1.6" /></svg>
      </div>
    </div>
    <div className="h-[5px] w-[449px] shrink-0 bg-[#c4c4c4] border-t border-[#888]" />
    <div className="h-[34px] w-[449px] shrink-0 border-b-2 border-[#c9c9c9] flex items-center justify-between pl-[6px] pr-[5px]">
      <span className="text-[25px] text-[#1c7089] leading-none">相关性</span><Chevron />
    </div>
    <div className="h-[35px] w-[449px] shrink-0 border-b-2 border-[#c9c9c9] flex items-center justify-between pl-[6px] pr-[5px]">
      <span className="text-[25px] text-[#1c7089] leading-none">细节</span><Chevron />
    </div>
  </div>
);

const Prt = () => (
  <I s={18}><path d="M6 2Q13 0 14 5L12 6Q9 4 8 7V10L16 8V14L8 17L3 14V6Z" fill="#2f4fc2" stroke="#a9b8ee" strokeWidth=".8" /></I>
);

/* ---------- torus ---------- */
const hex = (c: string) => [1, 3, 5].map((i) => parseInt(c.slice(i, i + 2), 16));
const ramp = (st: [number, string][], t: number) => {
  let k = 0;
  while (k < st.length - 2 && t > st[k + 1][0]) k++;
  const [a, ca] = st[k];
  const [b, cb] = st[k + 1];
  const u = Math.max(0, Math.min(1, (t - a) / (b - a)));
  const A = hex(ca), B = hex(cb);
  return `rgb(${A.map((v, i) => Math.round(v + (B[i] - v) * u)).join(",")})`;
};
const topRamp: [number, string][] = [[0, "#9db1b8"], [.08, "#b6c9d0"], [.25, "#cfe2e9"], [.38, "#d4e7ee"], [.55, "#a9bcc3"], [.7, "#7c8d93"], [.85, "#56656b"], [1, "#39454b"]];
const sideRamp: [number, string][] = [[0, "#8fa3aa"], [.1, "#adc0c7"], [.3, "#c6d9e0"], [.5, "#b7cad1"], [.7, "#96a9b0"], [.9, "#75878d"], [1, "#62737a"]];
const botRamp: [number, string][] = [[0, "#4a565c"], [.08, "#3f4b51"], [.25, "#5a6a70"], [.45, "#8fa3aa"], [.65, "#c2d5dc"], [.77, "#d8ebf1"], [.9, "#cfe2e9"], [1, "#bdd0d7"]];
const N = 80;
const rings = Array.from({ length: N }, (_, i) => {
  const t = i / (N - 1);
  return { t, cx: 953 + t * 1, cy: 555 - t * 1, rx: 346 - t * 116, ry: 223 - t * 114 };
});
const balls: [number, number][] = [[645, 340], [716, 332], [770, 330], [812, 332], [850, 333], [550, 368], [493, 402], [428, 447], [365, 508], [342, 548], [305, 625], [290, 720], [297, 785], [1110, 448], [1245, 655], [1248, 680], [1248, 710], [1245, 760]];
const lowBalls: [number, number][] = [[320, 840], [340, 875], [1230, 825], [1195, 890]];
const bx = (x: number) => 590 + x / 2.119;
const by = (y: number) => 310 + y / 3;
const Ball = ({ p }: { p: [number, number] }) => {
  const d = (bx(p[0]) - 954) / 230;
  return <ellipse cx={bx(p[0])} cy={by(p[1])} rx={14 - 6 * d * d} ry={13.5} fill="url(#ball)" />;
};
const Plus = ({ x, y, s = 7, c = "#3a62b5" }: { x: number; y: number; s?: number; c?: string }) => (
  <path d={`M${x} ${y - s}V${y + s}M${x - s} ${y}H${x + s}`} stroke={c} strokeWidth="1.7" />
);

const Scene = () => (
  <svg viewBox="484 274 1136 658" className="block w-[1136px] h-[658px]">
    <defs>
      <linearGradient id="bg" gradientUnits="userSpaceOnUse" x1="0" y1="274" x2="0" y2="932">
        <stop offset="0" stopColor="#b3b4b5" /><stop offset=".3" stopColor="#c4c5c6" /><stop offset=".55" stopColor="#d2d3d4" /><stop offset=".8" stopColor="#e2e3e5" /><stop offset="1" stopColor="#e7e9ec" />
      </linearGradient>
      {rings.map((r, i) => (
        <linearGradient key={i} id={`r${i}`} x1="0" y1="0" x2="0" y2="1">
          <stop offset="0" stopColor={ramp(topRamp, r.t)} />
          <stop offset=".25" stopColor={ramp(topRamp, r.t)} />
          <stop offset=".52" stopColor={ramp(sideRamp, r.t)} />
          <stop offset=".8" stopColor={ramp(botRamp, r.t)} />
          <stop offset="1" stopColor={ramp(botRamp, r.t)} />
        </linearGradient>
      ))}
      <radialGradient id="ball" cx=".45" cy=".32" r=".72">
        <stop offset="0" stopColor="#e4f0f3" /><stop offset=".4" stopColor="#b9ccd1" /><stop offset=".75" stopColor="#86989d" /><stop offset="1" stopColor="#5c6d72" />
      </radialGradient>
      <clipPath id="hole"><ellipse cx="954" cy="554" rx="230" ry="109" /></clipPath>
    </defs>
    <rect x="484" y="274" width="1136" height="658" fill="url(#bg)" />
    {rings.map((r, i) => <ellipse key={i} cx={r.cx} cy={r.cy} rx={r.rx} ry={r.ry} fill={`url(#r${i})`} />)}
    <ellipse cx="954" cy="554" rx="230" ry="109" fill="url(#bg)" />
    <path d="M725 545A231 131 0 0 1 1177 524" fill="none" stroke="#3b66bc" strokeWidth="3" />
    {balls.map((p, i) => <Ball key={i} p={p} />)}
    <g clipPath="url(#hole)">{lowBalls.map((p, i) => <Ball key={i} p={p} />)}</g>

    {/* work coordinate system */}
    <g stroke="#9b5e5e" strokeWidth="1" fill="none">
      <path d="M953 554V495M953 519L983 503V571M953 519L1013 554L983 571L953 554M953 554L1002 526M983 571L1004 583" />
    </g>
    <path d="M953 487L950 499H956Z" fill="#6c3a40" />
    <path d="M1012 521L999 526L1002 531Z" fill="#a0575a" />
    <path d="M1012 587L1000 580L998 586Z" fill="#b0686a" />
    <Plus x={953} y={554} s={7} c="#a85a5a" />
    <text x="948" y="486" fontSize="13" fill="#9b5e5e" fontFamily="Liberation Sans">Z</text>
    <text x="1013" y="521" fontSize="13" fill="#9b5e5e" fontFamily="Liberation Sans">Y</text>
    <text x="1012" y="596" fontSize="13" fill="#9b5e5e" fontFamily="Liberation Sans">X</text>
    <Plus x={973} y={542} /><Plus x={1095} y={614} /><Plus x={1215} y={686} /><Plus x={1336} y={758} /><Plus x={1457} y={830} />

    {/* watermark */}
    <g>
      <path d="M1373 837L1409 858L1397 866L1373 852Z" fill="#cfe7f5" />
      <path d="M1373 837L1337 858V878L1349 866L1373 852Z" fill="#bfe0f4" />
      <path d="M1373 837L1390 847L1397 866L1409 858Z" fill="#8fd0f0" />
      <path d="M1409 858V899L1397 890V866Z" fill="#8fd0f0" />
      <path d="M1409 899L1373 919L1353 908L1373 904L1397 890Z" fill="#7cc8ee" />
      <path d="M1337 858V899L1353 908L1349 890V866Z" fill="#a5d6f2" />
      <path d="M1337 899L1373 919L1355 886Z" fill="#78c8f0" />
      <path d="M1373 852L1397 866V890L1373 904L1349 890V866Z" fill="#e3e5e8" />
      <path d="M1373 860L1389 869L1373 878L1357 869Z" fill="#bfe0f4" />
      <path d="M1357 869L1373 878V896L1357 887Z" fill="#a5d6f2" />
      <path d="M1389 869L1373 878V896L1389 887Z" fill="#7cc8ee" />
    </g>
    <text x="1417" y="887" fontSize="42" fontWeight="700" fill="#fff" fillOpacity=".42" fontFamily="'Liberation Sans','Noto Sans CJK SC',sans-serif">3D世界网</text>
    <text x="1418" y="906" fontSize="13" fontWeight="700" fill="#fff" fillOpacity=".42" letterSpacing="4.2" fontFamily="'Liberation Sans',sans-serif">WWW.3DSJW.COM</text>
    <Plus x={1577} y={903} />

    {/* view triad */}
    <path d="M558 881L573 890V908L558 917L543 908V890Z" fill="#cfd1d3" fillOpacity=".7" stroke="#a9adaf" />
    <path d="M558 899L573 890M558 899L543 890M558 899V917" stroke="#b2b6b8" fill="none" />
    <path d="M543 908L574 889" stroke="#b7cdb5" strokeWidth="2" />
    <path d="M541 907V890" stroke="#1c33a0" strokeWidth="2" /><path d="M541 882L538 892H544Z" fill="#1c33a0" />
    <path d="M541 909L568 924" stroke="#c23a3a" strokeWidth="2.4" /><path d="M570 926L560 922L564 916Z" fill="#c23a3a" />
    <circle cx="541" cy="909" r="3.5" fill="#d8d8d8" stroke="#999" />
    <text x="537" y="878" fontSize="11" fill="#2b43b0" fontFamily="Liberation Sans">Z</text>
    <text x="569" y="931" fontSize="11" fill="#b04040" fontFamily="Liberation Sans">X</text>
  </svg>
);

const Viewport = () => (
  <div className="flex-1 flex flex-col overflow-hidden">
    <div className="h-[32px] flex shrink-0 bg-white">
      <div className="w-[142px] flex items-center pl-[5px] shrink-0 text-[20.4px] text-[#222] font-['Open_Sans','Noto_Sans_CJK_SC',sans-serif]">
        <Prt /><span className="ml-[3px] whitespace-nowrap">_部件5.prt</span>
      </div>
      <div className="w-[142px] bg-[#5a9fb9] flex items-center pl-[5px] shrink-0 text-[20.4px] text-white font-['Open_Sans','Noto_Sans_CJK_SC',sans-serif]">
        <Prt /><span className="ml-[3px] whitespace-nowrap">_部件4.prt</span><span className="ml-[5px] text-[17px] font-bold leading-none">×</span>
      </div>
    </div>
    <div className="h-[3px] bg-[#5a9fb9] shrink-0" />
    <Scene />
  </div>
);

export default function App() {
  return (
    <div className="w-[1620px] h-[932px] overflow-hidden bg-white flex flex-col font-['Noto_Sans_CJK_SC','Noto_Sans',sans-serif]">
      <TitleBar />
      <Tabs />
      <Ribbon />
      <SelBar />
      <div className="flex-1 flex min-h-0">
        <Rail />
        <LeftPanel />
        <Viewport />
      </div>
    </div>
  );
}
